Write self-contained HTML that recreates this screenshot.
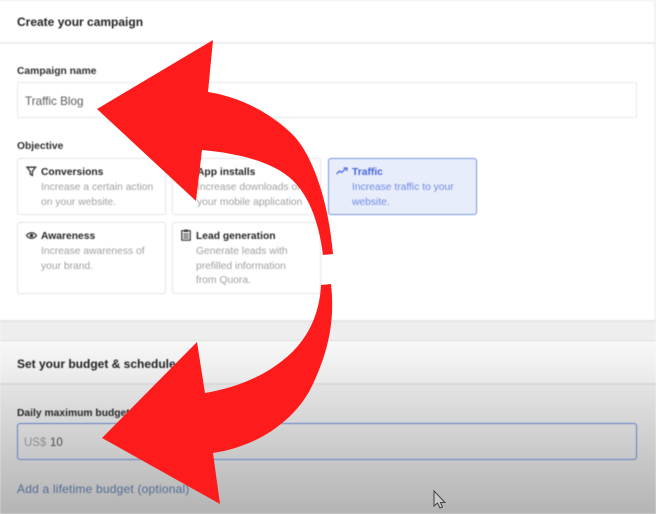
<!DOCTYPE html>
<html><head><meta charset="utf-8">
<style>
html,body{margin:0;padding:0;width:656px;height:514px;overflow:hidden;background:#fff}
body{font-family:"Liberation Sans",sans-serif;position:relative}
#w{position:absolute;left:0;top:0;width:656px;height:514px;filter:blur(.45px)}
.a{position:absolute;white-space:nowrap}
.h{font-size:12px;font-weight:bold;color:#222}
.l{font-size:10.3px;font-weight:bold;color:#2e2e2e}
.card{position:absolute;box-sizing:border-box;background:#fff;border:1px solid #e8e8e8;border-radius:3px;box-shadow:0 0 1px #e2e2e2}
.t{position:absolute;left:41px;font-size:10.3px;font-weight:bold;color:#262626;white-space:nowrap;line-height:14px}
.d{position:absolute;font-size:10.3px;color:#a0a0a0;line-height:14.5px;white-space:nowrap}
.inp{position:absolute;box-sizing:border-box;left:17px;width:620px;height:36px;border:1px solid #e8e8e8;border-radius:2px;background:#fff}
svg{position:absolute;overflow:visible}
</style></head><body>
<div id="w">
<div class="a" style="left:0;top:0;width:656px;height:1px;background:#eee"></div>
<div class="a" style="left:654px;top:0;width:2px;height:322px;background:#f2f2f2"></div>
<div class="a" style="left:0;top:42px;width:656px;height:2px;background:#ececec"></div>
<div class="a h" style="left:17px;top:15px">Create your campaign</div>
<div class="a l" style="left:17px;top:66px">Campaign name</div>
<div class="inp" style="top:82px"></div>
<div class="a" style="left:25px;top:95px;font-size:11.7px;color:#5c5c5c">Traffic Blog</div>
<div class="a l" style="left:17px;top:141px">Objective</div>

<div class="card" style="left:17px;top:158px;width:149px;height:57px"></div>
<div class="card" style="left:172px;top:158px;width:149px;height:57px"></div>
<div class="card" style="left:328px;top:158px;width:149px;height:57px;background:#e8edfb;border:1.500px solid #7a98e4"></div>
<div class="card" style="left:17px;top:222px;width:149px;height:72px"></div>
<div class="card" style="left:172px;top:222px;width:149px;height:72px"></div>

<div class="t" style="top:166px">Conversions</div>
<div class="d" style="left:41px;top:181px">Increase a certain action<br>on your website.</div>
<svg style="left:26px;top:166px" width="11" height="11" viewBox="0 0 11 11"><path d="M1 1.200H9.600L6.400 5.400V9.400L4.200 8.200V5.400Z" fill="none" stroke="#333" stroke-width="1.300"/></svg>

<div class="t" style="left:197px;top:166px">App installs</div>
<div class="d" style="left:197px;top:181px">Increase downloads of<br>your mobile application</div>

<div class="t" style="left:352px;top:166px;color:#4464d8">Traffic</div>
<div class="d" style="left:352px;top:181px;color:#708ae2">Increase traffic to your<br>website.</div>
<svg style="left:336px;top:167px" width="12" height="9" viewBox="0 0 12 9"><path d="M.5 7 3.500 4 5.500 5.500 10.500 1M7.500 1H11V4" fill="none" stroke="#4f6fdc" stroke-width="1.300"/></svg>

<div class="t" style="top:230px">Awareness</div>
<div class="d" style="left:41px;top:245px">Increase awareness of<br>your brand.</div>
<svg style="left:26px;top:231px" width="11" height="9" viewBox="0 0 11 9"><path d="M.5 4.500C3 .8 8 .8 10.500 4.500 8 8.200 3 8.200.5 4.500Z" fill="none" stroke="#333" stroke-width="1.200"/><circle cx="5.500" cy="4.500" r="1.800" fill="#333"/></svg>

<div class="t" style="left:196px;top:230px">Lead generation</div>
<div class="d" style="left:196px;top:245px">Generate leads with<br>prefilled information<br>from Quora.</div>
<svg style="left:181px;top:229px" width="10" height="12" viewBox="0 0 10 12"><path d="M3 1.700H.8V11.200H9.200V1.700H7" fill="none" stroke="#333" stroke-width="1.200"/><path d="M3 .6H7V3H3Z" fill="#333"/><path d="M2.400 5H7.600M2.400 7H7.600M2.400 9H7.600" stroke="#333" stroke-width="1"/></svg>

<div class="a" style="left:0;top:320px;width:656px;height:21px;background:#eeeeee;border-top:2px solid #e4e4e4;border-bottom:1px solid #dedede;box-sizing:border-box"></div>
<div class="a" style="left:0;top:341px;width:656px;height:173px;background:linear-gradient(#f8f8f8 0,#e9e9e9 43px,#e3e3e3 44px,#c9c9c9 115px,#b4b4b4 173px)"></div>
<div class="a" style="left:0;top:383px;width:656px;height:2px;background:#d8d8d8"></div>
<div class="a h" style="left:17px;top:357px;color:#222">Set your budget &amp; schedule</div>
<div class="a l" style="left:17px;top:408px;color:#262626">Daily maximum budget</div>
<div class="inp" style="top:423px;height:37px;background:transparent;border:1.500px solid #5f7fc4;border-radius:3px"></div>
<div class="a" style="left:24px;top:437px;font-size:11.5px;color:#8c8c8c">US$</div>
<div class="a" style="left:50px;top:437px;font-size:11.5px;color:#4a4a4a">10</div>
<div class="a" style="left:17px;top:482px;font-size:12px;color:#506b92;letter-spacing:.2px">Add a lifetime budget (optional)</div>
</div>

<svg style="left:0;top:0" width="656" height="514" viewBox="0 0 656 514">
<path fill="#fe1b1b" d="M97 109 213 40 208 92C235 96 268 110 293 135 310 152 328 195 333 254L323 255C319 222 308 190 285 174 265 160 235 153 202 150L196 201Z"/>
<path fill="#fe1b1b" d="M102 438 197 342 205 393C235 388 272 375 297 347 312 330 320 308 321 285L331 284C335 320 329 352 310 390 292 423 255 447 213 453L220 504Z"/>
<path fill="#fff" stroke="#444" stroke-width="1" d="M434 491V506L437.500 503 440 508 442.500 507 440.500 502.500H445Z" fill-opacity=".25"/>
</svg>
</body></html>
